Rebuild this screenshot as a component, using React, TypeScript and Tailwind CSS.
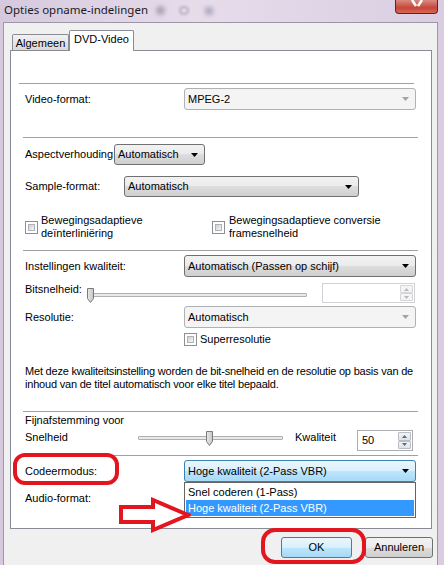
import React from 'react';

type ComboKind = 'normal' | 'disabled' | 'focus';

function DownArrow({ color }: { color: string }) {
  return (
    <svg width="7" height="4" viewBox="0 0 7 4" className="shrink-0">
      <path d="M0 0h7L3.5 4z" fill={color} />
    </svg>
  );
}

function Combo({ text = '', kind = 'normal', className = '' }: { text?: string; kind?: ComboKind; className?: string }) {
  const skin = {
    normal: 'border-[#707070] bg-[linear-gradient(#f2f2f2,#ebebeb_50%,#dddddd_50%,#cfcfcf)]',
    disabled: 'border-[#adb2b5] bg-[#f4f4f4]',
    focus: 'border-[#3c7fb1] bg-[linear-gradient(#eaf6fd,#d9f0fc_50%,#bee6fd_50%,#a7d9f5)]',
  }[kind];
  return (
    <div className={`flex shrink-0 items-center justify-between rounded-[3px] border pl-[3px] pr-[6px] ${skin} ${className}`}>
      <span className="whitespace-nowrap">{text}</span>
      <DownArrow color={kind === 'disabled' ? '#a3a3a3' : '#000'} />
    </div>
  );
}

function Check() {
  return (
    <div className="h-[13px] w-[13px] shrink-0 border border-[#8e8f8f] bg-white p-[2px]">
      <div className="h-full w-full border border-[#aeb3b9] bg-[linear-gradient(135deg,#cbcfd5,#f6f6f6)]" />
    </div>
  );
}

function Sep({ className = '' }: { className?: string }) {
  return <div className={`h-px w-[395px] shrink-0 bg-[#a0a0a0] ${className}`} />;
}

function SpinArrow({ up, color }: { up: boolean; color: string }) {
  return (
    <svg width="5" height="3" viewBox="0 0 5 3">
      <path d={up ? 'M0 3h5L2.5 0z' : 'M0 0h5L2.5 3z'} fill={color} />
    </svg>
  );
}

function Spin({ value = '', disabled = false, className = '' }: { value?: string; disabled?: boolean; className?: string }) {
  const btn = disabled
    ? 'border-[#d5d5d5] bg-[#f4f4f4]'
    : 'border-[#b9bec5] bg-[linear-gradient(#f3f3f3,#e2e2e2)]';
  const arrow = disabled ? '#b8b8b8' : '#3d6fb4';
  return (
    <div className={`flex shrink-0 border bg-white ${disabled ? 'border-[#cfd1d4]' : 'border-[#abadb3]'} ${className}`}>
      <div className="flex flex-1 items-center pl-[4px]">{value}</div>
      <div className="flex w-[15px] flex-col p-[1px]">
        <div className={`flex flex-1 items-center justify-center rounded-[1px] border ${btn}`}>
          <SpinArrow up color={arrow} />
        </div>
        <div className={`flex flex-1 items-center justify-center rounded-[1px] border ${btn}`}>
          <SpinArrow up={false} color={arrow} />
        </div>
      </div>
    </div>
  );
}

function Thumb({ className = '' }: { className?: string }) {
  return (
    <svg width="7" height="15" viewBox="0 0 7 15" className={`absolute top-0 ${className}`}>
      <defs>
        <linearGradient id="tg" x1="0" x2="1">
          <stop offset="0" stopColor="#e9e9e9" />
          <stop offset="1" stopColor="#c4c4c4" />
        </linearGradient>
      </defs>
      <path d="M0.5 0.5h6v10l-3 4l-3-4z" fill="url(#tg)" stroke="#7b7b7b" />
    </svg>
  );
}

function Slider({ className = '', thumb = '' }: { className?: string; thumb?: string }) {
  return (
    <div className={`relative h-[15px] shrink-0 ${className}`}>
      <div className="absolute left-[3px] right-0 top-[5px] h-[4px] rounded-[1px] border border-[#b0b0b0] bg-[#e7eaea]" />
      <Thumb className={thumb} />
    </div>
  );
}

function Button({ label, primary = false, className = '' }: { label: string; primary?: boolean; className?: string }) {
  return (
    <div
      className={`flex h-[21px] items-center justify-center rounded-[3px] border ${
        primary
          ? 'border-[#3c7fb1] bg-[linear-gradient(#eaf6fd,#d9f0fc_50%,#bee6fd_50%,#a7d9f5)]'
          : 'border-[#707070] bg-[linear-gradient(#f2f2f2,#ebebeb_50%,#dddddd_50%,#cfcfcf)]'
      } ${className}`}
    >
      {label}
    </div>
  );
}

export default function App() {
  return (
    <div className="relative h-[565px] w-[444px] overflow-hidden bg-[linear-gradient(90deg,#d6c9de,#e6dcea_45%,#dacde2)] font-['Liberation_Sans',Arial,sans-serif] text-[11px] leading-[13px] text-black">
      {/* title bar */}
      <div className="flex h-[22px] items-start justify-between">
        <div className="flex items-center">
          <span className="pl-[4px] pt-[2px] font-['Noto_Sans',sans-serif] text-[11.5px] leading-[15px] text-[#1b1b1b]">
            Opties opname-indelingen
          </span>
          <div className="ml-[8px] mt-[3px] h-[9px] w-[9px] rounded-full bg-[#8a7f93] opacity-60 blur-[2px]" />
          <div className="ml-[14px] mt-[3px] h-[9px] w-[10px] rounded-full border-2 border-[#8e8496] opacity-50 blur-[1px]" />
          <div className="ml-[16px] mt-[4px] h-[8px] w-[8px] bg-[#7d7b9c] opacity-50 blur-[2px]" />
        </div>
        <div className="mr-[6px] flex h-[14px] w-[43px] justify-center rounded-b-[4px] border border-t-0 border-[#5b2520] bg-[linear-gradient(#d98b7e,#c8453b_60%,#d86a52)]">
          <svg width="12" height="8" viewBox="0 0 12 8">
            <path d="M1 0l4 6M11 0l-4 6" stroke="#fff" strokeWidth="2.6" />
          </svg>
        </div>
      </div>

      {/* client area */}
      <div className="ml-[3px] mr-[6px] flex h-[543px] flex-col border-l border-r border-t border-[#9b97a6] bg-[#f0f0f0] pl-[6px] pr-[5px] pt-[7px]">
        <div className="flex h-[20px] items-end pl-[2px]">
          <div className="flex h-[16px] w-[57px] items-center justify-center rounded-t-[2px] border border-b-0 border-[#898c95] bg-[linear-gradient(#f2f2f2,#e6e6e6_50%,#d9d9d9)] pt-px">
            Algemeen
          </div>
          <div className="relative z-10 -mb-px flex h-[21px] w-[65px] items-start justify-center rounded-t-[2px] border border-b-0 border-[#898c95] bg-white pt-[2px]">
            DVD-Video
          </div>
        </div>

        <div className="flex h-[479px] w-[422px] flex-col border border-[#898c95] bg-white">
          <Sep className="ml-[8px] mt-[32px]" />
          <div className="mt-[4px] flex h-[22px] items-center pl-[14px]">
            <span className="w-[159px]">Video-format:</span>
            <Combo text="MPEG-2" kind="disabled" className="h-[22px] w-[232px]" />
          </div>
          <Sep className="ml-[12px] mt-[27px]" />
          <div className="mt-[6px] flex h-[21px] items-center pl-[14px]">
            <span className="w-[89px]">Aspectverhouding</span>
            <Combo text="Automatisch" className="h-[21px] w-[91px]" />
          </div>
          <div className="mt-[11px] flex h-[21px] items-center pl-[14px]">
            <span className="w-[99px]">Sample-format:</span>
            <Combo text="Automatisch" className="h-[21px] w-[235px]" />
          </div>
          <div className="mt-[17px] flex h-[26px] items-center pl-[14px]">
            <div className="flex w-[187px] items-center gap-[3px]">
              <Check />
              <span>
                Bewegingsadaptieve
                <br />
                deïnterliniëring
              </span>
            </div>
            <div className="flex items-center gap-[4px]">
              <Check />
              <span>
                Bewegingsadaptieve conversie
                <br />
                framesnelheid
              </span>
            </div>
          </div>
          <Sep className="ml-[12px] mt-[10px]" />
          <div className="mt-[4px] flex h-[22px] items-center pl-[14px]">
            <span className="w-[159px]">Instellingen kwaliteit:</span>
            <Combo text="Automatisch (Passen op schijf)" className="h-[22px] w-[232px]" />
          </div>
          <div className="mt-[6px] flex h-[20px] items-start pl-[14px]">
            <span className="w-[62px]">Bitsnelheid:</span>
            <Slider className="mt-[5px] w-[220px]" thumb="left-0" />
            <Spin disabled className="ml-[15px] h-[20px] w-[93px]" />
          </div>
          <div className="mt-[3px] flex h-[22px] items-center pl-[14px]">
            <span className="w-[159px]">Resolutie:</span>
            <Combo text="Automatisch" kind="disabled" className="h-[22px] w-[232px]" />
          </div>
          <div className="mt-[4px] flex h-[14px] items-center gap-[3px] pl-[173px]">
            <Check />
            <span>Superresolutie</span>
          </div>
          <div className="mt-[19px] whitespace-nowrap pl-[14px] tracking-[-0.2px]">
            Met deze kwaliteitsinstelling worden de bit-snelheid en de resolutie op basis van de
            <br />
            inhoud van de titel automatisch voor elke titel bepaald.
          </div>
          <Sep className="ml-[12px] mt-[20px]" />
          <div className="mt-[2px] h-[13px] pl-[14px]">Fijnafstemming voor</div>
          <div className="mt-[3px] flex h-[21px] items-start pl-[14px]">
            <span className="mt-[1px] w-[110px]">Snelheid</span>
            <Slider className="mt-[1px] w-[148px]" thumb="left-[71px]" />
            <span className="ml-[12px] mt-[1px] w-[62px]">Kwaliteit</span>
            <Spin value="50" className="h-[21px] w-[56px]" />
          </div>
          <Sep className="ml-[12px] mt-[4px]" />
          <div className="mt-[4px] flex h-[22px] items-center pl-[14px]">
            <span className="w-[159px]">Codeermodus:</span>
            <div className="relative">
              <Combo text="Hoge kwaliteit (2-Pass VBR)" kind="focus" className="h-[22px] w-[232px]" />
              <div className="absolute left-0 top-full z-10 flex w-[232px] flex-col border border-[#646464] bg-white p-px">
                <div className="flex h-[16px] items-center pl-[2px]">Snel coderen (1-Pass)</div>
                <div className="flex h-[16px] items-center bg-[#3399ff] pl-[2px] text-white">Hoge kwaliteit (2-Pass VBR)</div>
              </div>
            </div>
          </div>
          <div className="mt-[10px] h-[14px] pl-[14px]">Audio-format:</div>
        </div>

        <div className="-mr-px mt-[8px] flex justify-end gap-[13px]">
          <Button label="OK" primary className="w-[71px]" />
          <Button label="Annuleren" className="w-[68px]" />
        </div>
      </div>

      {/* red annotations */}
      <div className="absolute left-[13px] top-[453px] h-[32px] w-[106px] rounded-[12px] border-4 border-[#e3151f]" />
      <div className="absolute left-[261px] top-[528px] h-[36px] w-[105px] rounded-[14px] border-4 border-[#e3151f]" />
      <svg className="absolute left-[119px] top-[497px] z-20" width="72" height="36" viewBox="0 0 72 36">
        <path d="M2 10H34V3L69 18L34 33V25H2Z" fill="none" stroke="#e3151f" strokeWidth="4" />
      </svg>
    </div>
  );
}
